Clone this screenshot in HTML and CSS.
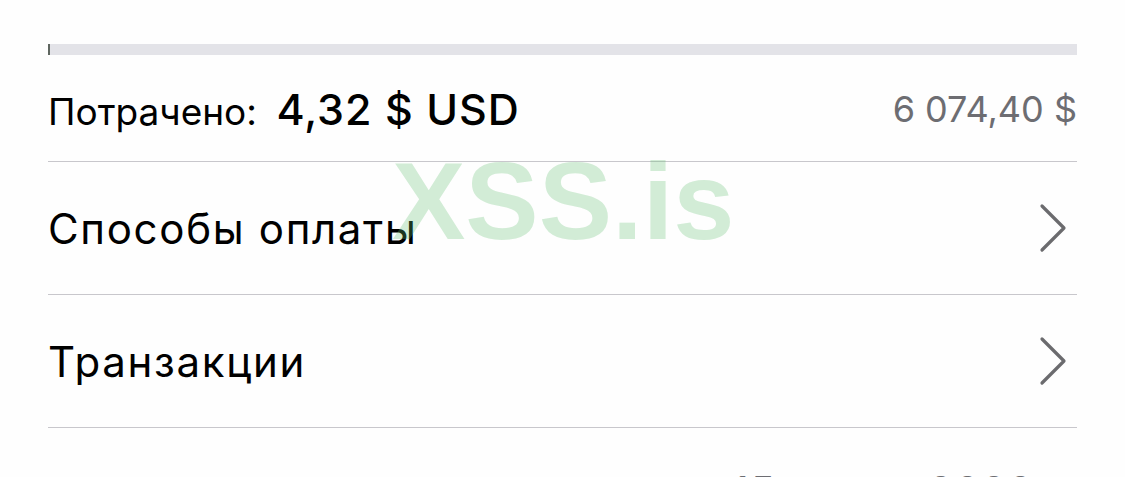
FILE: index.html
```
<html>
  <head>
    <meta charset="utf-8" />
    <title>Подписка</title>
    <link rel="stylesheet" href="styles.css">
  </head>
  <body>
    <div class="page">
      <div class="progress"><div class="progress-fill"></div></div>
      <div class="row spent">
        <span class="label">Потрачено: <b class="amount">4,32 $ USD</b></span>
        <span class="limit">6 074,40 $</span>
      </div>
      <div class="row link">
        <span>Способы оплаты</span>
        <svg class="chevron" width="28" height="50" viewBox="0 0 28 50">
          <polyline points="3,3 25,25 3,47" />
        </svg>
      </div>
      <div class="row link">
        <span>Транзакции</span>
        <svg class="chevron" width="28" height="50" viewBox="0 0 28 50">
          <polyline points="3,3 25,25 3,47" />
        </svg>
      </div>
      <div class="row date">
        <span>15 марта 2020 г.</span>
      </div>
      <div class="watermark">XSS.is</div>
    </div>
  </body>
</html>
```

FILE: styles.css
```
body {
  margin: 0;
  background: #fefefe;
  font-family: Inter, "Liberation Sans", sans-serif;
  color: #000;
  overflow: hidden;
}
.page {
  padding: 44px 48px 0 48px;
  height: 477px;
  box-sizing: border-box;
}
.progress {
  height: 11px;
  background: #e3e3e8;
}
.progress-fill {
  width: 2px;
  height: 100%;
  background: #5f6660;
}
.row {
  display: flex;
  justify-content: space-between;
  align-items: center;
  border-bottom: 1px solid #c8c7cc;
}
.spent {
  height: 107px;
  padding-top: 2px;
  box-sizing: border-box;
}
.label {
  font-size: 37px;
}
.amount {
  margin-left: 9px;
  font-size: 43px;
  font-weight: 500;
  letter-spacing: 1px;
}
.limit {
  font-size: 36px;
  color: #6d6d72;
}
.link {
  height: 132px;
  font-size: 42px;
  letter-spacing: 0.04em;
}
.chevron {
  margin-right: 10px;
}
.chevron polyline {
  fill: none;
  stroke: #6b6b6e;
  stroke-width: 3.2;
  stroke-linecap: round;
  stroke-linejoin: round;
}
.date {
  border-bottom: none;
  justify-content: flex-end;
  padding-top: 38px;
  font-size: 40px;
  letter-spacing: 0.04em;
  color: #6d6d72;
}
.watermark {
  position: absolute;
  left: 392px;
  top: 146px;
  font-family: "Liberation Sans", sans-serif;
  font-weight: bold;
  font-size: 110px;
  line-height: 1;
  color: rgba(96, 190, 110, 0.28);
}
```
